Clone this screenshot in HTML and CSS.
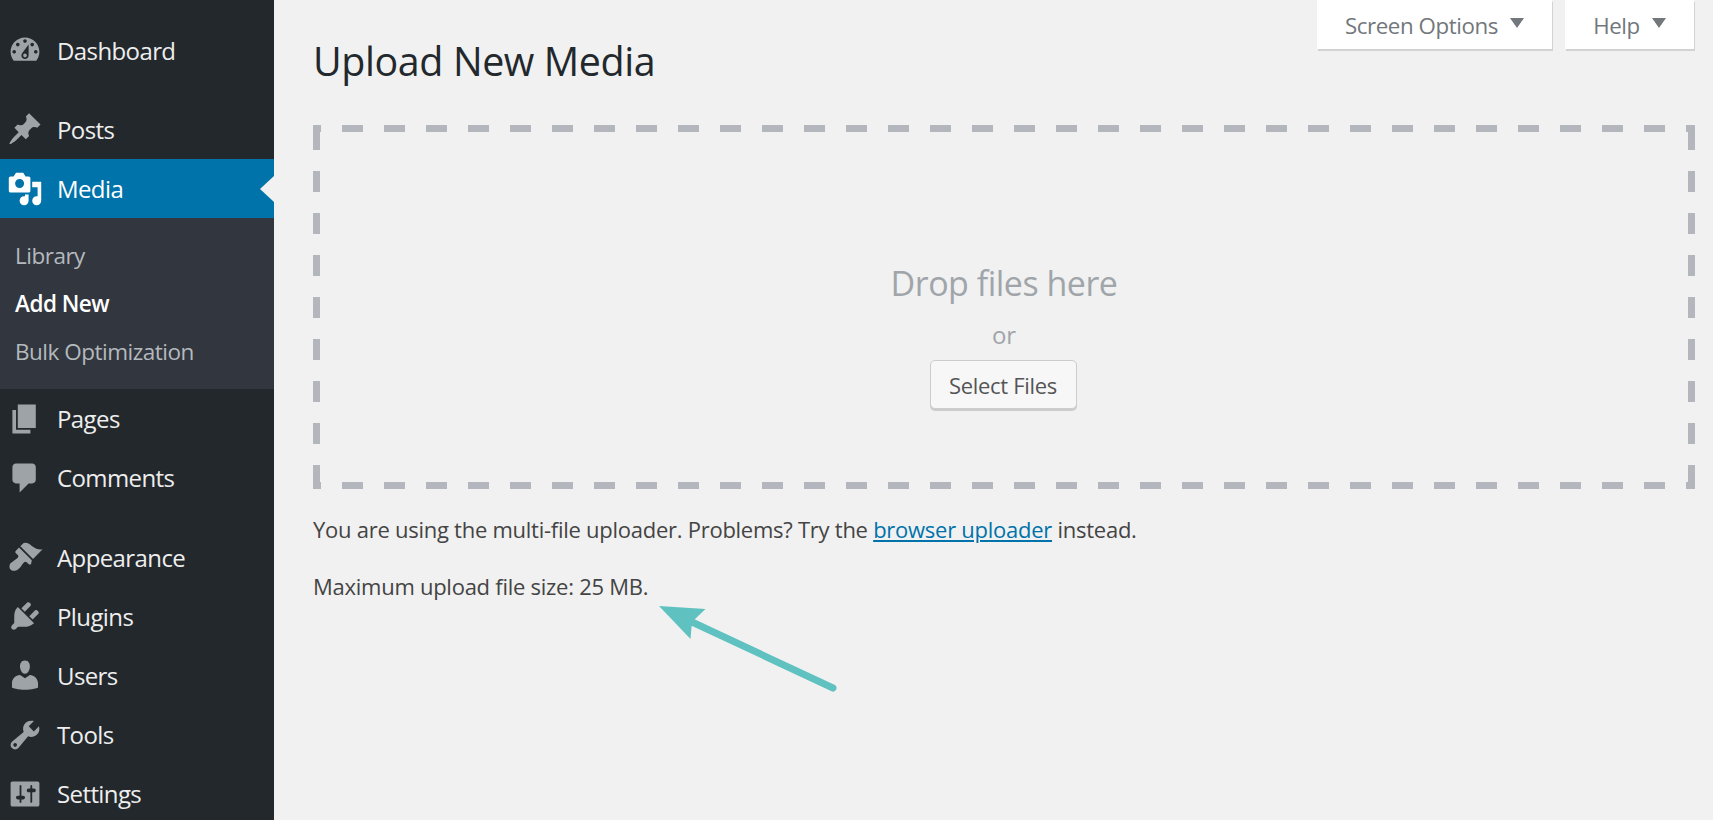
FILE: index.html
```html
<!DOCTYPE html>
<html lang="en">
<head>
    <meta charset="UTF-8">
    <title>Upload New Media</title>
    <link rel="stylesheet" href="styles.css">
</head>
<body>
    <div class="app">
        <nav class="sidebar">
            <a class="menu-item first">
                <svg class="menu-icon" viewBox="0 0 20 20"><path d="M3.76 16h12.48c1.1-1.37 1.76-3.11 1.76-5 0-4.42-3.58-8-8-8s-8 3.58-8 8c0 1.89.66 3.63 1.76 5zM10 4c.55 0 1 .45 1 1s-.45 1-1 1-1-.45-1-1 .45-1 1-1zM6 6c.55 0 1 .45 1 1s-.45 1-1 1-1-.45-1-1 .45-1 1-1zm8 0c.55 0 1 .45 1 1s-.45 1-1 1-1-.45-1-1 .45-1 1-1zm-5.37 5.55L12 7v6c0 1.1-.9 2-2 2s-2-.9-2-2c0-.57.24-1.08.63-1.45zM4 10c.55 0 1 .45 1 1s-.45 1-1 1-1-.45-1-1 .45-1 1-1zm12 0c.55 0 1 .45 1 1s-.45 1-1 1-1-.45-1-1 .45-1 1-1zm-5 3c0-.55-.45-1-1-1s-1 .45-1 1 .45 1 1 1 1-.45 1-1z" fill-rule="evenodd"/></svg>
                Dashboard
            </a>
            <div class="menu-sep"></div>
            <a class="menu-item">
                <svg class="menu-icon" viewBox="0 0 20 20"><path d="M10.44 3.02l1.82-1.82 6.36 6.35-1.83 1.82c-1.05-.68-2.48-.57-3.41.36l-.75.75c-.92.93-1.04 2.35-.35 3.41l-1.83 1.82-2.41-2.41-2.8 2.79c-.42.42-3.38 2.71-3.8 2.29s1.86-3.39 2.28-3.81l2.79-2.79L4.1 9.36l1.83-1.82c1.05.69 2.48.57 3.4-.36l.75-.75c.93-.92 1.05-2.35.36-3.41z"/></svg>
                Posts
            </a>
            <a class="menu-item active">
                <svg class="menu-icon" viewBox="0 0 20 20"><path d="M13 11V4c0-.55-.45-1-1-1h-1.67L9 1H5L3.67 3H2c-.55 0-1 .45-1 1v7c0 .55.45 1 1 1h10c.55 0 1-.45 1-1zM7 4.5c1.38 0 2.5 1.12 2.5 2.5S8.38 9.5 7 9.5 4.5 8.38 4.5 7 5.62 4.5 7 4.5zM14 6h5v10.500c0 1.38-1.12 2.5-2.500 2.5S14 17.880 14 16.500s1.120-2.500 2.500-2.500c.17 0 .34.020.5.050V9h-3V6zm-4 8.050V13h2v3.500c0 1.380-1.120 2.500-2.500 2.500S7 17.880 7 16.500 8.120 14 9.500 14c.17 0 .34.020.5.050z" fill-rule="evenodd"/></svg>
                Media
            </a>
            <div class="submenu">
                <a class="submenu-item">Library</a>
                <a class="submenu-item current">Add New</a>
                <a class="submenu-item">Bulk Optimization</a>
            </div>
            <a class="menu-item">
                <svg class="menu-icon" viewBox="0 0 20 20"><path d="M6 15V2h10v13H6zm-1 1h8v2H3V5h2v11z"/></svg>
                Pages
            </a>
            <a class="menu-item">
                <svg class="menu-icon" viewBox="0 0 20 20"><path d="M5 2h9c1.100 0 2 .9 2 2v7c0 1.100-.9 2-2 2h-2l-5 5v-5H5c-1.100 0-2-.9-2-2V4c0-1.100.9-2 2-2z"/></svg>
                Comments
            </a>
            <div class="menu-sep"></div>
            <a class="menu-item">
                <svg class="menu-icon" viewBox="0 0 20 20"><path d="M14.480 11.060L7.410 3.990l1.500-1.500c.5-.56 2.300-.47 3.510.32 1.210.8 1.430 1.280 2.910 2.100 1.180.64 2.450 1.260 4.450.85zm-.71.71L6.700 4.700 4.930 6.470c-.39.39-.39 1.020 0 1.410l1.060 1.060c.39.39.39 1.030 0 1.420-.6.6-1.430 1.110-2.210 1.690-.35.26-.7.53-1.010.84C1.430 13.230.91 15.780 1.980 17c1.070 1.220 3.510.75 4.990-.91.31-.31.58-.66.84-1.010.58-.78 1.090-1.610 1.690-2.210.39-.39 1.030-.39 1.420 0l1.060 1.060c.39.39 1.020.39 1.410 0z"/></svg>
                Appearance
            </a>
            <a class="menu-item">
                <svg class="menu-icon" viewBox="0 0 20 20"><path d="M13.110 4.360L9.870 7.600 8 5.730l3.240-3.240c.35-.34 1.050-.2 1.560.32.52.51.66 1.210.31 1.550zm-8 1.770l.91-1.120 9.010 9.010-1.190.84c-.71.71-2.630 1.160-3.820 1.160H6.140L4.900 17.260c-.59.59-1.540.59-2.120 0-.59-.58-.59-1.530 0-2.120l1.240-1.240v-3.880c0-1.130.4-3.190 1.090-3.890zm7.260 3.970l3.240-3.240c.34-.35 1.040-.21 1.550.31.52.51.66 1.210.31 1.550l-3.240 3.250z"/></svg>
                Plugins
            </a>
            <a class="menu-item">
                <svg class="menu-icon" viewBox="0 0 20 20"><path d="M10 9.250c-2.270 0-2.730-3.440-2.730-3.440C7 4.020 7.820 2 9.970 2c2.160 0 2.980 2.020 2.710 3.810 0 0-.41 3.440-2.680 3.440zm0 2.570L12.720 10c2.390 0 4.520 2.330 4.520 4.530v2.490s-3.650 1.130-7.240 1.130c-3.650 0-7.240-1.130-7.240-1.130v-2.490c0-2.250 1.940-4.480 4.470-4.480z"/></svg>
                Users
            </a>
            <a class="menu-item">
                <svg class="menu-icon" viewBox="0 0 20 20"><path d="M16.680 9.770c-1.340 1.340-3.300 1.670-4.950.99l-5.410 6.520c-.99.99-2.590.99-3.580 0s-.99-2.590 0-3.570l6.520-5.420c-.68-1.650-.35-3.610.99-4.950 1.280-1.280 3.120-1.620 4.720-1.060l-2.890 2.890 2.820 2.820 2.860-2.870c.53 1.580.18 3.390-1.080 4.650zM3.810 16.210c.4.39 1.040.39 1.430 0 .4-.4.4-1.040 0-1.430-.39-.4-1.030-.4-1.430 0-.39.39-.39 1.030 0 1.430z" fill-rule="evenodd"/></svg>
                Tools
            </a>
            <a class="menu-item">
                <svg class="menu-icon" viewBox="0 0 20 20"><path d="M18 16V4c0-.55-.45-1-1-1H3c-.55 0-1 .45-1 1v12c0 .55.45 1 1 1h14c.55 0 1-.45 1-1zM8 11h1c.55 0 1 .45 1 1s-.45 1-1 1H8v1.500c0 .28-.22.5-.5.5s-.5-.22-.5-.5V13H6c-.55 0-1-.45-1-1s.45-1 1-1h1V5.500c0-.28.22-.5.5-.5s.5.22.5.5V11zm5-2h-1c-.55 0-1-.45-1-1s.45-1 1-1h1V5.500c0-.28.22-.5.5-.5s.5.22.5.5V7h1c.55 0 1 .45 1 1s-.45 1-1 1h-1v5.500c0 .28-.22.5-.5.5s-.5-.22-.5-.5V9z" fill-rule="evenodd"/></svg>
                Settings
            </a>
        </nav>

        <main class="content">
            <div class="top-row">
                <h1 class="page-title">Upload New Media</h1>
                <div class="meta-tabs">
                    <button class="meta-tab options">Screen Options<span class="tab-arrow"></span></button>
                    <button class="meta-tab help">Help<span class="tab-arrow"></span></button>
                </div>
            </div>

            <div class="drop-zone">
                <p class="drop-title">Drop files here</p>
                <p class="drop-or">or</p>
                <button class="select-btn">Select Files</button>
            </div>

            <p class="note first-note">You are using the multi-file uploader. Problems? Try the <a class="note-link">browser uploader</a> instead.</p>
            <p class="note">Maximum upload file size: 25 MB.</p>

            <!-- arrow drawn over the screenshot -->
            <svg class="callout" viewBox="0 0 1713 820">
                <path class="callout-head" d="M659 606 L705.500 609 L694 620 L691.500 627 L690.500 639 Z"/>
                <path class="callout-tail" d="M692 622 L833 688"/>
            </svg>
        </main>
    </div>
</body>
</html>
```

FILE: styles.css
```css
body {
    margin: 0;
    background: #f1f1f1;
    font-family: "Open Sans", "Noto Sans", sans-serif;
    color: #444;
}

.app {
    display: flex;
    height: 820px;
    overflow: hidden;
}

/* left menu */
.sidebar {
    flex: 0 0 274px;
    background: #23282d;
    padding-top: 20.7px;
    box-sizing: border-box;
    height: 820px;
    overflow: hidden;
}

.menu-item {
    display: flex;
    align-items: center;
    gap: 14px;
    height: 59.2px;
    padding-left: 7px;
    box-sizing: border-box;
    color: #eee;
    font-size: 24px;
    letter-spacing: -0.6px;
    position: relative;
}

.menu-icon {
    width: 36px;
    height: 36px;
    flex: none;
    fill: #9ea3a8;
}

.menu-sep {
    height: 20px;
}

.menu-item.active {
    background: #0073aa;
    color: #fff;
}

.menu-item.active .menu-icon {
    fill: #fff;
}

/* little notch pointing at the content */
.menu-item.active::after {
    content: "";
    position: absolute;
    right: 0;
    top: 17px;
    border: 13px solid transparent;
    border-right: 14px solid #f1f1f1;
    border-left-width: 0;
}

.submenu {
    background: #32363e;
    height: 170.8px;
    padding-top: 14px;
    box-sizing: border-box;
}

.submenu-item {
    display: block;
    height: 48px;
    line-height: 48px;
    padding-left: 15px;
    font-size: 22.500px;
    letter-spacing: -0.5px;
    color: #b4b9be;
}

.submenu-item.current {
    color: #fff;
    font-weight: 600;
}

/* main column */
.content {
    flex: 1;
    padding: 0 18px 0 39px;
    min-width: 0;
}

.top-row {
    display: flex;
    justify-content: space-between;
    align-items: flex-start;
    height: 125px;
}

.page-title {
    margin: 35px 0 0;
    font-size: 39.400px;
    line-height: 52px;
    font-weight: 400;
    color: #23282d;
    letter-spacing: -0.4px;
}

.meta-tabs {
    display: flex;
    gap: 13px;
    margin-right: 1px;
}

.meta-tab {
    display: flex;
    align-items: center;
    justify-content: center;
    height: 49px;
    border: none;
    padding: 2px 0 0;
    background: #fff;
    box-shadow: 1px 2px 0 #d2d2d2;
    font-family: inherit;
    font-size: 22.300px;
    letter-spacing: -0.4px;
    color: #72777c;
}

.meta-tab.options {
    width: 235px;
}

.meta-tab.help {
    width: 129px;
}

.tab-arrow {
    width: 0;
    height: 0;
    margin: -5px 0 0 12px;
    border-top: 10px solid #72777c;
    border-left: 7px solid transparent;
    border-right: 7px solid transparent;
}

.drop-zone {
    display: flex;
    flex-direction: column;
    align-items: center;
    height: 364px;
    box-sizing: border-box;
    padding-top: 129px;
    background-color: transparent;
    background-image:
        linear-gradient(to right, #b4b6bd 21px, transparent 21px),
        linear-gradient(to right, #b4b6bd 21px, transparent 21px),
        linear-gradient(to bottom, #b4b6bd 21px, transparent 21px),
        linear-gradient(to bottom, #b4b6bd 21px, transparent 21px);
    background-size: 42px 7px, 42px 7px, 7px 42px, 7px 42px;
    background-position: 29px 0, 29px 100%, 0 4px, 100% 4px;
    background-repeat: repeat-x, repeat-x, repeat-y, repeat-y;
}

.drop-title {
    margin: 0;
    font-size: 34px;
    line-height: 58px;
    letter-spacing: -0.5px;
    color: #a0a5aa;
}

.drop-or {
    margin: -1px 0 1px;
    font-size: 24px;
    line-height: 48px;
    color: #a0a5aa;
}

.select-btn {
    width: 147px;
    height: 49px;
    margin-left: -2px;
    padding-top: 1px;
    border: 1px solid #ccc;
    border-radius: 5px;
    background: #f7f7f7;
    box-shadow: 0 2px 0 #ccc;
    font-family: inherit;
    font-size: 22px;
    letter-spacing: -0.3px;
    color: #555;
}

.note {
    margin: 0 0 29px;
    font-size: 22px;
    line-height: 28px;
    letter-spacing: -0.26px;
    color: #444;
}

.first-note {
    margin-top: 26px;
}

.note-link {
    color: #0073aa;
    text-decoration: underline;
}

.callout {
    position: absolute;
    left: 0;
    top: 0;
    width: 1713px;
    height: 820px;
    pointer-events: none;
}

.callout-head {
    fill: #5fc2c1;
}

.callout-tail {
    fill: none;
    stroke: #5fc2c1;
    stroke-width: 7;
    stroke-linecap: round;
}
```
